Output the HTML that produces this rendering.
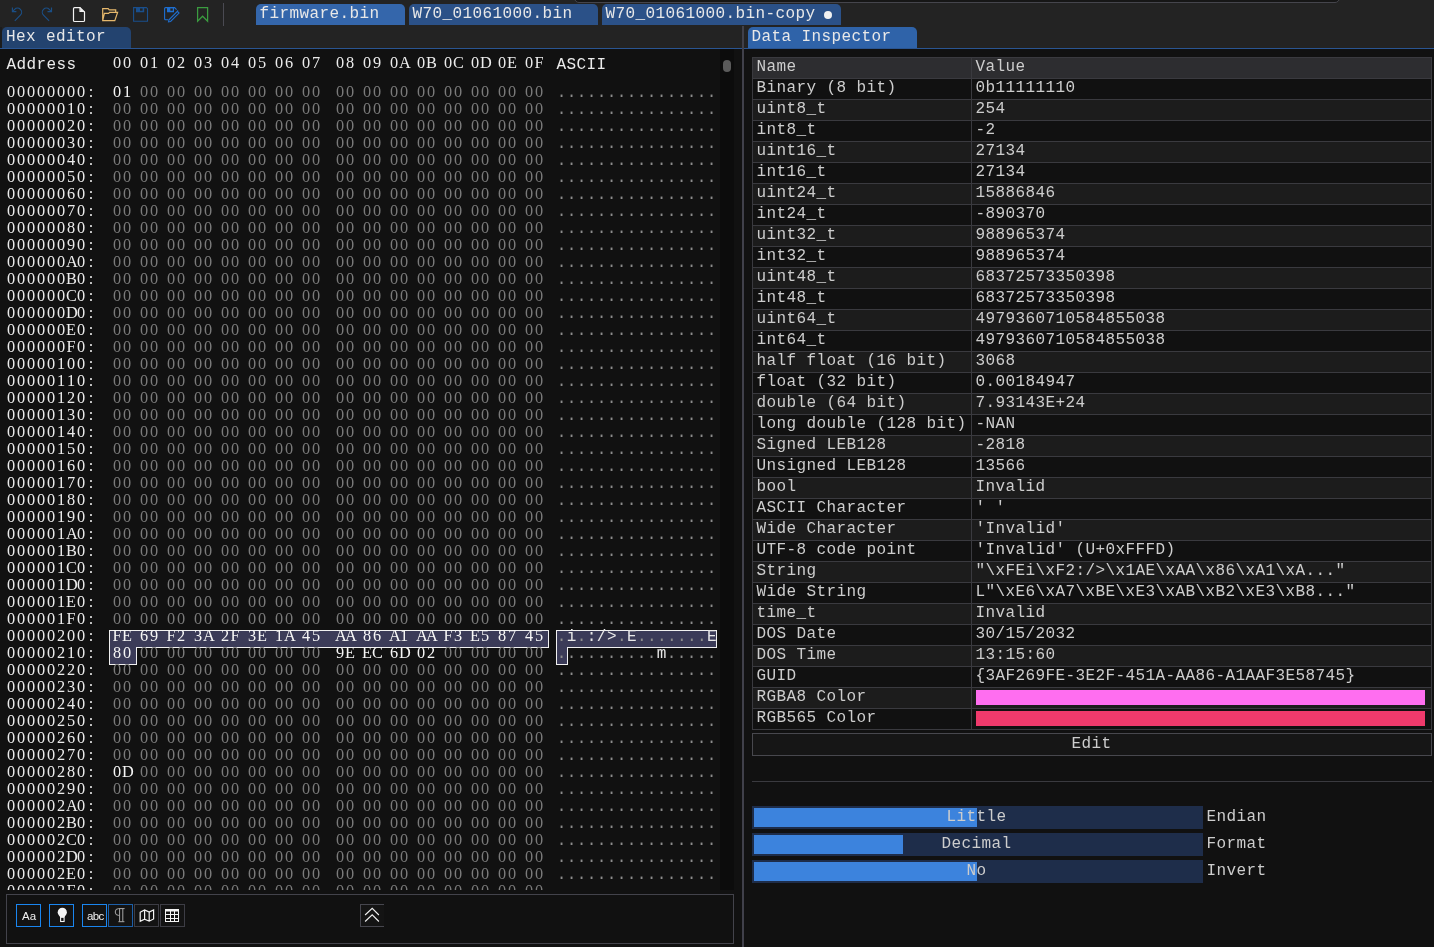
<!DOCTYPE html>
<html><head><meta charset="utf-8"><style>
*{margin:0;padding:0;box-sizing:border-box}
html,body{width:1434px;height:947px;overflow:hidden;background:#232323}
body{position:relative;font-family:"Liberation Mono",monospace;font-size:16px;letter-spacing:0.4px;line-height:17px;color:#e8e8e8}
#root{position:absolute;left:0;top:0;width:1434px;height:947px;will-change:transform;overflow:hidden}
.a{position:absolute}
p{position:absolute;white-space:pre;margin:1px 0 0 -0.5px}
.S{margin:0}
.S{display:flex;font-family:"Liberation Serif",serif;font-size:16.3px;line-height:17px;letter-spacing:0}
.S i{display:block;width:10px;text-align:center;font-style:normal}
.ad{left:6px;color:#ececec}
.hd{color:#ececec}
.z{color:#7b7b7b}
.nz{color:#f6f6f6}
.as{left:557.3px;color:#8c8c8c}
.as b{font-weight:normal;color:#e8e8e8}
.tx{color:#cdcdcd}
.hl{position:absolute;left:752px;width:680px;height:1px;background:#3a3a3f}
.tab{position:absolute;border-radius:5px 5px 0 0;color:#e8e8e8}
.btn{position:absolute;width:25px;height:23px;background:#131313}
</style></head><body><div id="root">
<div class="a" style="left:574px;top:-10px;width:766px;height:13px;background:#161616;border:1px solid #45454c;border-radius:0 0 5px 5px"></div>
<div class="tab" style="left:256px;top:4px;width:149px;height:21px;background:#3466ab"><p style="left:4px;top:1px">firmware.bin</p></div>
<div class="tab" style="left:409px;top:4px;width:189px;height:21px;background:#2b5188"><p style="left:4px;top:1px">W70_01061000.bin</p></div>
<div class="tab" style="left:602px;top:4px;width:239px;height:21px;background:#2b5188"><p style="left:4px;top:1px">W70_01061000.bin-copy</p><div class="a" style="left:222px;top:7px;width:8px;height:8px;border-radius:4px;background:#f0f0f0"></div></div>
<div class="a" style="left:223px;top:3px;width:1px;height:23px;background:#4a4a52"></div>
<div class="a" style="left:0;top:27px;width:2px;height:21px;background:#1c1c1c"></div>
<div class="tab" style="left:2px;top:27px;width:129px;height:21px;background:#23436f"><p style="left:4.5px;top:0.5px">Hex editor</p></div>
<div class="tab" style="left:748px;top:27px;width:169px;height:21px;background:#2f63a9"><p style="left:4px;top:1px">Data Inspector</p></div>
<div class="a" style="left:0;top:48px;width:742px;height:1px;background:#2a5592"></div>
<div class="a" style="left:744px;top:48px;width:690px;height:1px;background:#2a5592"></div>
<div class="a" style="left:742px;top:26px;width:2px;height:921px;background:#40404a"></div>
<div class="a" style="left:0;top:49px;width:742px;height:898px;background:#111111"></div>
<div class="a" style="left:0;top:49px;width:742px;height:841px;overflow:hidden">
 <div class="a" style="left:0;top:-49px;width:742px;height:947px">
  <p style="top:56px;left:7px;color:#ececec">Address</p>
  <p class="S hd" style="top:54px;left:112px"><i>0</i><i>0</i></p><p class="S hd" style="top:54px;left:139px"><i>0</i><i>1</i></p><p class="S hd" style="top:54px;left:166px"><i>0</i><i>2</i></p><p class="S hd" style="top:54px;left:193px"><i>0</i><i>3</i></p><p class="S hd" style="top:54px;left:220px"><i>0</i><i>4</i></p><p class="S hd" style="top:54px;left:247px"><i>0</i><i>5</i></p><p class="S hd" style="top:54px;left:274px"><i>0</i><i>6</i></p><p class="S hd" style="top:54px;left:301px"><i>0</i><i>7</i></p><p class="S hd" style="top:54px;left:335px"><i>0</i><i>8</i></p><p class="S hd" style="top:54px;left:362px"><i>0</i><i>9</i></p><p class="S hd" style="top:54px;left:389px"><i>0</i><i>A</i></p><p class="S hd" style="top:54px;left:416px"><i>0</i><i>B</i></p><p class="S hd" style="top:54px;left:443px"><i>0</i><i>C</i></p><p class="S hd" style="top:54px;left:470px"><i>0</i><i>D</i></p><p class="S hd" style="top:54px;left:497px"><i>0</i><i>E</i></p><p class="S hd" style="top:54px;left:524px"><i>0</i><i>F</i></p>
  <p style="top:56px;left:557px;color:#ececec">ASCII</p>
  <div class="a" style="left:109px;top:630px;width:440px;height:18px;background:#3b3b58;border:1px solid #f0f0f0;border-bottom:none"></div>
  <div class="a" style="left:109px;top:647px;width:28px;height:18px;background:#3b3b58;border:1px solid #f0f0f0;border-top:none"></div>
  <div class="a" style="left:136px;top:647px;width:413px;height:1px;background:#f0f0f0"></div>
  <div class="a" style="left:556px;top:630px;width:161px;height:18px;background:#3b3b58;border:1px solid #f0f0f0;border-bottom:none"></div>
  <div class="a" style="left:556px;top:647px;width:12px;height:18px;background:#3b3b58;border:1px solid #f0f0f0;border-top:none"></div>
  <div class="a" style="left:567px;top:647px;width:150px;height:1px;background:#f0f0f0"></div>
  <p class="S ad" style="top:83px"><i>0</i><i>0</i><i>0</i><i>0</i><i>0</i><i>0</i><i>0</i><i>0</i><i>:</i></p><p class="S nz" style="top:83px;left:112px"><i>0</i><i>1</i></p><p class="S z" style="top:83px;left:139px"><i>0</i><i>0</i></p><p class="S z" style="top:83px;left:166px"><i>0</i><i>0</i></p><p class="S z" style="top:83px;left:193px"><i>0</i><i>0</i></p><p class="S z" style="top:83px;left:220px"><i>0</i><i>0</i></p><p class="S z" style="top:83px;left:247px"><i>0</i><i>0</i></p><p class="S z" style="top:83px;left:274px"><i>0</i><i>0</i></p><p class="S z" style="top:83px;left:301px"><i>0</i><i>0</i></p><p class="S z" style="top:83px;left:335px"><i>0</i><i>0</i></p><p class="S z" style="top:83px;left:362px"><i>0</i><i>0</i></p><p class="S z" style="top:83px;left:389px"><i>0</i><i>0</i></p><p class="S z" style="top:83px;left:416px"><i>0</i><i>0</i></p><p class="S z" style="top:83px;left:443px"><i>0</i><i>0</i></p><p class="S z" style="top:83px;left:470px"><i>0</i><i>0</i></p><p class="S z" style="top:83px;left:497px"><i>0</i><i>0</i></p><p class="S z" style="top:83px;left:524px"><i>0</i><i>0</i></p><p class="as" style="top:84px">................</p><p class="S ad" style="top:100px"><i>0</i><i>0</i><i>0</i><i>0</i><i>0</i><i>0</i><i>1</i><i>0</i><i>:</i></p><p class="S z" style="top:100px;left:112px"><i>0</i><i>0</i></p><p class="S z" style="top:100px;left:139px"><i>0</i><i>0</i></p><p class="S z" style="top:100px;left:166px"><i>0</i><i>0</i></p><p class="S z" style="top:100px;left:193px"><i>0</i><i>0</i></p><p class="S z" style="top:100px;left:220px"><i>0</i><i>0</i></p><p class="S z" style="top:100px;left:247px"><i>0</i><i>0</i></p><p class="S z" style="top:100px;left:274px"><i>0</i><i>0</i></p><p class="S z" style="top:100px;left:301px"><i>0</i><i>0</i></p><p class="S z" style="top:100px;left:335px"><i>0</i><i>0</i></p><p class="S z" style="top:100px;left:362px"><i>0</i><i>0</i></p><p class="S z" style="top:100px;left:389px"><i>0</i><i>0</i></p><p class="S z" style="top:100px;left:416px"><i>0</i><i>0</i></p><p class="S z" style="top:100px;left:443px"><i>0</i><i>0</i></p><p class="S z" style="top:100px;left:470px"><i>0</i><i>0</i></p><p class="S z" style="top:100px;left:497px"><i>0</i><i>0</i></p><p class="S z" style="top:100px;left:524px"><i>0</i><i>0</i></p><p class="as" style="top:101px">................</p><p class="S ad" style="top:117px"><i>0</i><i>0</i><i>0</i><i>0</i><i>0</i><i>0</i><i>2</i><i>0</i><i>:</i></p><p class="S z" style="top:117px;left:112px"><i>0</i><i>0</i></p><p class="S z" style="top:117px;left:139px"><i>0</i><i>0</i></p><p class="S z" style="top:117px;left:166px"><i>0</i><i>0</i></p><p class="S z" style="top:117px;left:193px"><i>0</i><i>0</i></p><p class="S z" style="top:117px;left:220px"><i>0</i><i>0</i></p><p class="S z" style="top:117px;left:247px"><i>0</i><i>0</i></p><p class="S z" style="top:117px;left:274px"><i>0</i><i>0</i></p><p class="S z" style="top:117px;left:301px"><i>0</i><i>0</i></p><p class="S z" style="top:117px;left:335px"><i>0</i><i>0</i></p><p class="S z" style="top:117px;left:362px"><i>0</i><i>0</i></p><p class="S z" style="top:117px;left:389px"><i>0</i><i>0</i></p><p class="S z" style="top:117px;left:416px"><i>0</i><i>0</i></p><p class="S z" style="top:117px;left:443px"><i>0</i><i>0</i></p><p class="S z" style="top:117px;left:470px"><i>0</i><i>0</i></p><p class="S z" style="top:117px;left:497px"><i>0</i><i>0</i></p><p class="S z" style="top:117px;left:524px"><i>0</i><i>0</i></p><p class="as" style="top:118px">................</p><p class="S ad" style="top:134px"><i>0</i><i>0</i><i>0</i><i>0</i><i>0</i><i>0</i><i>3</i><i>0</i><i>:</i></p><p class="S z" style="top:134px;left:112px"><i>0</i><i>0</i></p><p class="S z" style="top:134px;left:139px"><i>0</i><i>0</i></p><p class="S z" style="top:134px;left:166px"><i>0</i><i>0</i></p><p class="S z" style="top:134px;left:193px"><i>0</i><i>0</i></p><p class="S z" style="top:134px;left:220px"><i>0</i><i>0</i></p><p class="S z" style="top:134px;left:247px"><i>0</i><i>0</i></p><p class="S z" style="top:134px;left:274px"><i>0</i><i>0</i></p><p class="S z" style="top:134px;left:301px"><i>0</i><i>0</i></p><p class="S z" style="top:134px;left:335px"><i>0</i><i>0</i></p><p class="S z" style="top:134px;left:362px"><i>0</i><i>0</i></p><p class="S z" style="top:134px;left:389px"><i>0</i><i>0</i></p><p class="S z" style="top:134px;left:416px"><i>0</i><i>0</i></p><p class="S z" style="top:134px;left:443px"><i>0</i><i>0</i></p><p class="S z" style="top:134px;left:470px"><i>0</i><i>0</i></p><p class="S z" style="top:134px;left:497px"><i>0</i><i>0</i></p><p class="S z" style="top:134px;left:524px"><i>0</i><i>0</i></p><p class="as" style="top:135px">................</p><p class="S ad" style="top:151px"><i>0</i><i>0</i><i>0</i><i>0</i><i>0</i><i>0</i><i>4</i><i>0</i><i>:</i></p><p class="S z" style="top:151px;left:112px"><i>0</i><i>0</i></p><p class="S z" style="top:151px;left:139px"><i>0</i><i>0</i></p><p class="S z" style="top:151px;left:166px"><i>0</i><i>0</i></p><p class="S z" style="top:151px;left:193px"><i>0</i><i>0</i></p><p class="S z" style="top:151px;left:220px"><i>0</i><i>0</i></p><p class="S z" style="top:151px;left:247px"><i>0</i><i>0</i></p><p class="S z" style="top:151px;left:274px"><i>0</i><i>0</i></p><p class="S z" style="top:151px;left:301px"><i>0</i><i>0</i></p><p class="S z" style="top:151px;left:335px"><i>0</i><i>0</i></p><p class="S z" style="top:151px;left:362px"><i>0</i><i>0</i></p><p class="S z" style="top:151px;left:389px"><i>0</i><i>0</i></p><p class="S z" style="top:151px;left:416px"><i>0</i><i>0</i></p><p class="S z" style="top:151px;left:443px"><i>0</i><i>0</i></p><p class="S z" style="top:151px;left:470px"><i>0</i><i>0</i></p><p class="S z" style="top:151px;left:497px"><i>0</i><i>0</i></p><p class="S z" style="top:151px;left:524px"><i>0</i><i>0</i></p><p class="as" style="top:152px">................</p><p class="S ad" style="top:168px"><i>0</i><i>0</i><i>0</i><i>0</i><i>0</i><i>0</i><i>5</i><i>0</i><i>:</i></p><p class="S z" style="top:168px;left:112px"><i>0</i><i>0</i></p><p class="S z" style="top:168px;left:139px"><i>0</i><i>0</i></p><p class="S z" style="top:168px;left:166px"><i>0</i><i>0</i></p><p class="S z" style="top:168px;left:193px"><i>0</i><i>0</i></p><p class="S z" style="top:168px;left:220px"><i>0</i><i>0</i></p><p class="S z" style="top:168px;left:247px"><i>0</i><i>0</i></p><p class="S z" style="top:168px;left:274px"><i>0</i><i>0</i></p><p class="S z" style="top:168px;left:301px"><i>0</i><i>0</i></p><p class="S z" style="top:168px;left:335px"><i>0</i><i>0</i></p><p class="S z" style="top:168px;left:362px"><i>0</i><i>0</i></p><p class="S z" style="top:168px;left:389px"><i>0</i><i>0</i></p><p class="S z" style="top:168px;left:416px"><i>0</i><i>0</i></p><p class="S z" style="top:168px;left:443px"><i>0</i><i>0</i></p><p class="S z" style="top:168px;left:470px"><i>0</i><i>0</i></p><p class="S z" style="top:168px;left:497px"><i>0</i><i>0</i></p><p class="S z" style="top:168px;left:524px"><i>0</i><i>0</i></p><p class="as" style="top:169px">................</p><p class="S ad" style="top:185px"><i>0</i><i>0</i><i>0</i><i>0</i><i>0</i><i>0</i><i>6</i><i>0</i><i>:</i></p><p class="S z" style="top:185px;left:112px"><i>0</i><i>0</i></p><p class="S z" style="top:185px;left:139px"><i>0</i><i>0</i></p><p class="S z" style="top:185px;left:166px"><i>0</i><i>0</i></p><p class="S z" style="top:185px;left:193px"><i>0</i><i>0</i></p><p class="S z" style="top:185px;left:220px"><i>0</i><i>0</i></p><p class="S z" style="top:185px;left:247px"><i>0</i><i>0</i></p><p class="S z" style="top:185px;left:274px"><i>0</i><i>0</i></p><p class="S z" style="top:185px;left:301px"><i>0</i><i>0</i></p><p class="S z" style="top:185px;left:335px"><i>0</i><i>0</i></p><p class="S z" style="top:185px;left:362px"><i>0</i><i>0</i></p><p class="S z" style="top:185px;left:389px"><i>0</i><i>0</i></p><p class="S z" style="top:185px;left:416px"><i>0</i><i>0</i></p><p class="S z" style="top:185px;left:443px"><i>0</i><i>0</i></p><p class="S z" style="top:185px;left:470px"><i>0</i><i>0</i></p><p class="S z" style="top:185px;left:497px"><i>0</i><i>0</i></p><p class="S z" style="top:185px;left:524px"><i>0</i><i>0</i></p><p class="as" style="top:186px">................</p><p class="S ad" style="top:202px"><i>0</i><i>0</i><i>0</i><i>0</i><i>0</i><i>0</i><i>7</i><i>0</i><i>:</i></p><p class="S z" style="top:202px;left:112px"><i>0</i><i>0</i></p><p class="S z" style="top:202px;left:139px"><i>0</i><i>0</i></p><p class="S z" style="top:202px;left:166px"><i>0</i><i>0</i></p><p class="S z" style="top:202px;left:193px"><i>0</i><i>0</i></p><p class="S z" style="top:202px;left:220px"><i>0</i><i>0</i></p><p class="S z" style="top:202px;left:247px"><i>0</i><i>0</i></p><p class="S z" style="top:202px;left:274px"><i>0</i><i>0</i></p><p class="S z" style="top:202px;left:301px"><i>0</i><i>0</i></p><p class="S z" style="top:202px;left:335px"><i>0</i><i>0</i></p><p class="S z" style="top:202px;left:362px"><i>0</i><i>0</i></p><p class="S z" style="top:202px;left:389px"><i>0</i><i>0</i></p><p class="S z" style="top:202px;left:416px"><i>0</i><i>0</i></p><p class="S z" style="top:202px;left:443px"><i>0</i><i>0</i></p><p class="S z" style="top:202px;left:470px"><i>0</i><i>0</i></p><p class="S z" style="top:202px;left:497px"><i>0</i><i>0</i></p><p class="S z" style="top:202px;left:524px"><i>0</i><i>0</i></p><p class="as" style="top:203px">................</p><p class="S ad" style="top:219px"><i>0</i><i>0</i><i>0</i><i>0</i><i>0</i><i>0</i><i>8</i><i>0</i><i>:</i></p><p class="S z" style="top:219px;left:112px"><i>0</i><i>0</i></p><p class="S z" style="top:219px;left:139px"><i>0</i><i>0</i></p><p class="S z" style="top:219px;left:166px"><i>0</i><i>0</i></p><p class="S z" style="top:219px;left:193px"><i>0</i><i>0</i></p><p class="S z" style="top:219px;left:220px"><i>0</i><i>0</i></p><p class="S z" style="top:219px;left:247px"><i>0</i><i>0</i></p><p class="S z" style="top:219px;left:274px"><i>0</i><i>0</i></p><p class="S z" style="top:219px;left:301px"><i>0</i><i>0</i></p><p class="S z" style="top:219px;left:335px"><i>0</i><i>0</i></p><p class="S z" style="top:219px;left:362px"><i>0</i><i>0</i></p><p class="S z" style="top:219px;left:389px"><i>0</i><i>0</i></p><p class="S z" style="top:219px;left:416px"><i>0</i><i>0</i></p><p class="S z" style="top:219px;left:443px"><i>0</i><i>0</i></p><p class="S z" style="top:219px;left:470px"><i>0</i><i>0</i></p><p class="S z" style="top:219px;left:497px"><i>0</i><i>0</i></p><p class="S z" style="top:219px;left:524px"><i>0</i><i>0</i></p><p class="as" style="top:220px">................</p><p class="S ad" style="top:236px"><i>0</i><i>0</i><i>0</i><i>0</i><i>0</i><i>0</i><i>9</i><i>0</i><i>:</i></p><p class="S z" style="top:236px;left:112px"><i>0</i><i>0</i></p><p class="S z" style="top:236px;left:139px"><i>0</i><i>0</i></p><p class="S z" style="top:236px;left:166px"><i>0</i><i>0</i></p><p class="S z" style="top:236px;left:193px"><i>0</i><i>0</i></p><p class="S z" style="top:236px;left:220px"><i>0</i><i>0</i></p><p class="S z" style="top:236px;left:247px"><i>0</i><i>0</i></p><p class="S z" style="top:236px;left:274px"><i>0</i><i>0</i></p><p class="S z" style="top:236px;left:301px"><i>0</i><i>0</i></p><p class="S z" style="top:236px;left:335px"><i>0</i><i>0</i></p><p class="S z" style="top:236px;left:362px"><i>0</i><i>0</i></p><p class="S z" style="top:236px;left:389px"><i>0</i><i>0</i></p><p class="S z" style="top:236px;left:416px"><i>0</i><i>0</i></p><p class="S z" style="top:236px;left:443px"><i>0</i><i>0</i></p><p class="S z" style="top:236px;left:470px"><i>0</i><i>0</i></p><p class="S z" style="top:236px;left:497px"><i>0</i><i>0</i></p><p class="S z" style="top:236px;left:524px"><i>0</i><i>0</i></p><p class="as" style="top:237px">................</p><p class="S ad" style="top:253px"><i>0</i><i>0</i><i>0</i><i>0</i><i>0</i><i>0</i><i>A</i><i>0</i><i>:</i></p><p class="S z" style="top:253px;left:112px"><i>0</i><i>0</i></p><p class="S z" style="top:253px;left:139px"><i>0</i><i>0</i></p><p class="S z" style="top:253px;left:166px"><i>0</i><i>0</i></p><p class="S z" style="top:253px;left:193px"><i>0</i><i>0</i></p><p class="S z" style="top:253px;left:220px"><i>0</i><i>0</i></p><p class="S z" style="top:253px;left:247px"><i>0</i><i>0</i></p><p class="S z" style="top:253px;left:274px"><i>0</i><i>0</i></p><p class="S z" style="top:253px;left:301px"><i>0</i><i>0</i></p><p class="S z" style="top:253px;left:335px"><i>0</i><i>0</i></p><p class="S z" style="top:253px;left:362px"><i>0</i><i>0</i></p><p class="S z" style="top:253px;left:389px"><i>0</i><i>0</i></p><p class="S z" style="top:253px;left:416px"><i>0</i><i>0</i></p><p class="S z" style="top:253px;left:443px"><i>0</i><i>0</i></p><p class="S z" style="top:253px;left:470px"><i>0</i><i>0</i></p><p class="S z" style="top:253px;left:497px"><i>0</i><i>0</i></p><p class="S z" style="top:253px;left:524px"><i>0</i><i>0</i></p><p class="as" style="top:254px">................</p><p class="S ad" style="top:270px"><i>0</i><i>0</i><i>0</i><i>0</i><i>0</i><i>0</i><i>B</i><i>0</i><i>:</i></p><p class="S z" style="top:270px;left:112px"><i>0</i><i>0</i></p><p class="S z" style="top:270px;left:139px"><i>0</i><i>0</i></p><p class="S z" style="top:270px;left:166px"><i>0</i><i>0</i></p><p class="S z" style="top:270px;left:193px"><i>0</i><i>0</i></p><p class="S z" style="top:270px;left:220px"><i>0</i><i>0</i></p><p class="S z" style="top:270px;left:247px"><i>0</i><i>0</i></p><p class="S z" style="top:270px;left:274px"><i>0</i><i>0</i></p><p class="S z" style="top:270px;left:301px"><i>0</i><i>0</i></p><p class="S z" style="top:270px;left:335px"><i>0</i><i>0</i></p><p class="S z" style="top:270px;left:362px"><i>0</i><i>0</i></p><p class="S z" style="top:270px;left:389px"><i>0</i><i>0</i></p><p class="S z" style="top:270px;left:416px"><i>0</i><i>0</i></p><p class="S z" style="top:270px;left:443px"><i>0</i><i>0</i></p><p class="S z" style="top:270px;left:470px"><i>0</i><i>0</i></p><p class="S z" style="top:270px;left:497px"><i>0</i><i>0</i></p><p class="S z" style="top:270px;left:524px"><i>0</i><i>0</i></p><p class="as" style="top:271px">................</p><p class="S ad" style="top:287px"><i>0</i><i>0</i><i>0</i><i>0</i><i>0</i><i>0</i><i>C</i><i>0</i><i>:</i></p><p class="S z" style="top:287px;left:112px"><i>0</i><i>0</i></p><p class="S z" style="top:287px;left:139px"><i>0</i><i>0</i></p><p class="S z" style="top:287px;left:166px"><i>0</i><i>0</i></p><p class="S z" style="top:287px;left:193px"><i>0</i><i>0</i></p><p class="S z" style="top:287px;left:220px"><i>0</i><i>0</i></p><p class="S z" style="top:287px;left:247px"><i>0</i><i>0</i></p><p class="S z" style="top:287px;left:274px"><i>0</i><i>0</i></p><p class="S z" style="top:287px;left:301px"><i>0</i><i>0</i></p><p class="S z" style="top:287px;left:335px"><i>0</i><i>0</i></p><p class="S z" style="top:287px;left:362px"><i>0</i><i>0</i></p><p class="S z" style="top:287px;left:389px"><i>0</i><i>0</i></p><p class="S z" style="top:287px;left:416px"><i>0</i><i>0</i></p><p class="S z" style="top:287px;left:443px"><i>0</i><i>0</i></p><p class="S z" style="top:287px;left:470px"><i>0</i><i>0</i></p><p class="S z" style="top:287px;left:497px"><i>0</i><i>0</i></p><p class="S z" style="top:287px;left:524px"><i>0</i><i>0</i></p><p class="as" style="top:288px">................</p><p class="S ad" style="top:304px"><i>0</i><i>0</i><i>0</i><i>0</i><i>0</i><i>0</i><i>D</i><i>0</i><i>:</i></p><p class="S z" style="top:304px;left:112px"><i>0</i><i>0</i></p><p class="S z" style="top:304px;left:139px"><i>0</i><i>0</i></p><p class="S z" style="top:304px;left:166px"><i>0</i><i>0</i></p><p class="S z" style="top:304px;left:193px"><i>0</i><i>0</i></p><p class="S z" style="top:304px;left:220px"><i>0</i><i>0</i></p><p class="S z" style="top:304px;left:247px"><i>0</i><i>0</i></p><p class="S z" style="top:304px;left:274px"><i>0</i><i>0</i></p><p class="S z" style="top:304px;left:301px"><i>0</i><i>0</i></p><p class="S z" style="top:304px;left:335px"><i>0</i><i>0</i></p><p class="S z" style="top:304px;left:362px"><i>0</i><i>0</i></p><p class="S z" style="top:304px;left:389px"><i>0</i><i>0</i></p><p class="S z" style="top:304px;left:416px"><i>0</i><i>0</i></p><p class="S z" style="top:304px;left:443px"><i>0</i><i>0</i></p><p class="S z" style="top:304px;left:470px"><i>0</i><i>0</i></p><p class="S z" style="top:304px;left:497px"><i>0</i><i>0</i></p><p class="S z" style="top:304px;left:524px"><i>0</i><i>0</i></p><p class="as" style="top:305px">................</p><p class="S ad" style="top:321px"><i>0</i><i>0</i><i>0</i><i>0</i><i>0</i><i>0</i><i>E</i><i>0</i><i>:</i></p><p class="S z" style="top:321px;left:112px"><i>0</i><i>0</i></p><p class="S z" style="top:321px;left:139px"><i>0</i><i>0</i></p><p class="S z" style="top:321px;left:166px"><i>0</i><i>0</i></p><p class="S z" style="top:321px;left:193px"><i>0</i><i>0</i></p><p class="S z" style="top:321px;left:220px"><i>0</i><i>0</i></p><p class="S z" style="top:321px;left:247px"><i>0</i><i>0</i></p><p class="S z" style="top:321px;left:274px"><i>0</i><i>0</i></p><p class="S z" style="top:321px;left:301px"><i>0</i><i>0</i></p><p class="S z" style="top:321px;left:335px"><i>0</i><i>0</i></p><p class="S z" style="top:321px;left:362px"><i>0</i><i>0</i></p><p class="S z" style="top:321px;left:389px"><i>0</i><i>0</i></p><p class="S z" style="top:321px;left:416px"><i>0</i><i>0</i></p><p class="S z" style="top:321px;left:443px"><i>0</i><i>0</i></p><p class="S z" style="top:321px;left:470px"><i>0</i><i>0</i></p><p class="S z" style="top:321px;left:497px"><i>0</i><i>0</i></p><p class="S z" style="top:321px;left:524px"><i>0</i><i>0</i></p><p class="as" style="top:322px">................</p><p class="S ad" style="top:338px"><i>0</i><i>0</i><i>0</i><i>0</i><i>0</i><i>0</i><i>F</i><i>0</i><i>:</i></p><p class="S z" style="top:338px;left:112px"><i>0</i><i>0</i></p><p class="S z" style="top:338px;left:139px"><i>0</i><i>0</i></p><p class="S z" style="top:338px;left:166px"><i>0</i><i>0</i></p><p class="S z" style="top:338px;left:193px"><i>0</i><i>0</i></p><p class="S z" style="top:338px;left:220px"><i>0</i><i>0</i></p><p class="S z" style="top:338px;left:247px"><i>0</i><i>0</i></p><p class="S z" style="top:338px;left:274px"><i>0</i><i>0</i></p><p class="S z" style="top:338px;left:301px"><i>0</i><i>0</i></p><p class="S z" style="top:338px;left:335px"><i>0</i><i>0</i></p><p class="S z" style="top:338px;left:362px"><i>0</i><i>0</i></p><p class="S z" style="top:338px;left:389px"><i>0</i><i>0</i></p><p class="S z" style="top:338px;left:416px"><i>0</i><i>0</i></p><p class="S z" style="top:338px;left:443px"><i>0</i><i>0</i></p><p class="S z" style="top:338px;left:470px"><i>0</i><i>0</i></p><p class="S z" style="top:338px;left:497px"><i>0</i><i>0</i></p><p class="S z" style="top:338px;left:524px"><i>0</i><i>0</i></p><p class="as" style="top:339px">................</p><p class="S ad" style="top:355px"><i>0</i><i>0</i><i>0</i><i>0</i><i>0</i><i>1</i><i>0</i><i>0</i><i>:</i></p><p class="S z" style="top:355px;left:112px"><i>0</i><i>0</i></p><p class="S z" style="top:355px;left:139px"><i>0</i><i>0</i></p><p class="S z" style="top:355px;left:166px"><i>0</i><i>0</i></p><p class="S z" style="top:355px;left:193px"><i>0</i><i>0</i></p><p class="S z" style="top:355px;left:220px"><i>0</i><i>0</i></p><p class="S z" style="top:355px;left:247px"><i>0</i><i>0</i></p><p class="S z" style="top:355px;left:274px"><i>0</i><i>0</i></p><p class="S z" style="top:355px;left:301px"><i>0</i><i>0</i></p><p class="S z" style="top:355px;left:335px"><i>0</i><i>0</i></p><p class="S z" style="top:355px;left:362px"><i>0</i><i>0</i></p><p class="S z" style="top:355px;left:389px"><i>0</i><i>0</i></p><p class="S z" style="top:355px;left:416px"><i>0</i><i>0</i></p><p class="S z" style="top:355px;left:443px"><i>0</i><i>0</i></p><p class="S z" style="top:355px;left:470px"><i>0</i><i>0</i></p><p class="S z" style="top:355px;left:497px"><i>0</i><i>0</i></p><p class="S z" style="top:355px;left:524px"><i>0</i><i>0</i></p><p class="as" style="top:356px">................</p><p class="S ad" style="top:372px"><i>0</i><i>0</i><i>0</i><i>0</i><i>0</i><i>1</i><i>1</i><i>0</i><i>:</i></p><p class="S z" style="top:372px;left:112px"><i>0</i><i>0</i></p><p class="S z" style="top:372px;left:139px"><i>0</i><i>0</i></p><p class="S z" style="top:372px;left:166px"><i>0</i><i>0</i></p><p class="S z" style="top:372px;left:193px"><i>0</i><i>0</i></p><p class="S z" style="top:372px;left:220px"><i>0</i><i>0</i></p><p class="S z" style="top:372px;left:247px"><i>0</i><i>0</i></p><p class="S z" style="top:372px;left:274px"><i>0</i><i>0</i></p><p class="S z" style="top:372px;left:301px"><i>0</i><i>0</i></p><p class="S z" style="top:372px;left:335px"><i>0</i><i>0</i></p><p class="S z" style="top:372px;left:362px"><i>0</i><i>0</i></p><p class="S z" style="top:372px;left:389px"><i>0</i><i>0</i></p><p class="S z" style="top:372px;left:416px"><i>0</i><i>0</i></p><p class="S z" style="top:372px;left:443px"><i>0</i><i>0</i></p><p class="S z" style="top:372px;left:470px"><i>0</i><i>0</i></p><p class="S z" style="top:372px;left:497px"><i>0</i><i>0</i></p><p class="S z" style="top:372px;left:524px"><i>0</i><i>0</i></p><p class="as" style="top:373px">................</p><p class="S ad" style="top:389px"><i>0</i><i>0</i><i>0</i><i>0</i><i>0</i><i>1</i><i>2</i><i>0</i><i>:</i></p><p class="S z" style="top:389px;left:112px"><i>0</i><i>0</i></p><p class="S z" style="top:389px;left:139px"><i>0</i><i>0</i></p><p class="S z" style="top:389px;left:166px"><i>0</i><i>0</i></p><p class="S z" style="top:389px;left:193px"><i>0</i><i>0</i></p><p class="S z" style="top:389px;left:220px"><i>0</i><i>0</i></p><p class="S z" style="top:389px;left:247px"><i>0</i><i>0</i></p><p class="S z" style="top:389px;left:274px"><i>0</i><i>0</i></p><p class="S z" style="top:389px;left:301px"><i>0</i><i>0</i></p><p class="S z" style="top:389px;left:335px"><i>0</i><i>0</i></p><p class="S z" style="top:389px;left:362px"><i>0</i><i>0</i></p><p class="S z" style="top:389px;left:389px"><i>0</i><i>0</i></p><p class="S z" style="top:389px;left:416px"><i>0</i><i>0</i></p><p class="S z" style="top:389px;left:443px"><i>0</i><i>0</i></p><p class="S z" style="top:389px;left:470px"><i>0</i><i>0</i></p><p class="S z" style="top:389px;left:497px"><i>0</i><i>0</i></p><p class="S z" style="top:389px;left:524px"><i>0</i><i>0</i></p><p class="as" style="top:390px">................</p><p class="S ad" style="top:406px"><i>0</i><i>0</i><i>0</i><i>0</i><i>0</i><i>1</i><i>3</i><i>0</i><i>:</i></p><p class="S z" style="top:406px;left:112px"><i>0</i><i>0</i></p><p class="S z" style="top:406px;left:139px"><i>0</i><i>0</i></p><p class="S z" style="top:406px;left:166px"><i>0</i><i>0</i></p><p class="S z" style="top:406px;left:193px"><i>0</i><i>0</i></p><p class="S z" style="top:406px;left:220px"><i>0</i><i>0</i></p><p class="S z" style="top:406px;left:247px"><i>0</i><i>0</i></p><p class="S z" style="top:406px;left:274px"><i>0</i><i>0</i></p><p class="S z" style="top:406px;left:301px"><i>0</i><i>0</i></p><p class="S z" style="top:406px;left:335px"><i>0</i><i>0</i></p><p class="S z" style="top:406px;left:362px"><i>0</i><i>0</i></p><p class="S z" style="top:406px;left:389px"><i>0</i><i>0</i></p><p class="S z" style="top:406px;left:416px"><i>0</i><i>0</i></p><p class="S z" style="top:406px;left:443px"><i>0</i><i>0</i></p><p class="S z" style="top:406px;left:470px"><i>0</i><i>0</i></p><p class="S z" style="top:406px;left:497px"><i>0</i><i>0</i></p><p class="S z" style="top:406px;left:524px"><i>0</i><i>0</i></p><p class="as" style="top:407px">................</p><p class="S ad" style="top:423px"><i>0</i><i>0</i><i>0</i><i>0</i><i>0</i><i>1</i><i>4</i><i>0</i><i>:</i></p><p class="S z" style="top:423px;left:112px"><i>0</i><i>0</i></p><p class="S z" style="top:423px;left:139px"><i>0</i><i>0</i></p><p class="S z" style="top:423px;left:166px"><i>0</i><i>0</i></p><p class="S z" style="top:423px;left:193px"><i>0</i><i>0</i></p><p class="S z" style="top:423px;left:220px"><i>0</i><i>0</i></p><p class="S z" style="top:423px;left:247px"><i>0</i><i>0</i></p><p class="S z" style="top:423px;left:274px"><i>0</i><i>0</i></p><p class="S z" style="top:423px;left:301px"><i>0</i><i>0</i></p><p class="S z" style="top:423px;left:335px"><i>0</i><i>0</i></p><p class="S z" style="top:423px;left:362px"><i>0</i><i>0</i></p><p class="S z" style="top:423px;left:389px"><i>0</i><i>0</i></p><p class="S z" style="top:423px;left:416px"><i>0</i><i>0</i></p><p class="S z" style="top:423px;left:443px"><i>0</i><i>0</i></p><p class="S z" style="top:423px;left:470px"><i>0</i><i>0</i></p><p class="S z" style="top:423px;left:497px"><i>0</i><i>0</i></p><p class="S z" style="top:423px;left:524px"><i>0</i><i>0</i></p><p class="as" style="top:424px">................</p><p class="S ad" style="top:440px"><i>0</i><i>0</i><i>0</i><i>0</i><i>0</i><i>1</i><i>5</i><i>0</i><i>:</i></p><p class="S z" style="top:440px;left:112px"><i>0</i><i>0</i></p><p class="S z" style="top:440px;left:139px"><i>0</i><i>0</i></p><p class="S z" style="top:440px;left:166px"><i>0</i><i>0</i></p><p class="S z" style="top:440px;left:193px"><i>0</i><i>0</i></p><p class="S z" style="top:440px;left:220px"><i>0</i><i>0</i></p><p class="S z" style="top:440px;left:247px"><i>0</i><i>0</i></p><p class="S z" style="top:440px;left:274px"><i>0</i><i>0</i></p><p class="S z" style="top:440px;left:301px"><i>0</i><i>0</i></p><p class="S z" style="top:440px;left:335px"><i>0</i><i>0</i></p><p class="S z" style="top:440px;left:362px"><i>0</i><i>0</i></p><p class="S z" style="top:440px;left:389px"><i>0</i><i>0</i></p><p class="S z" style="top:440px;left:416px"><i>0</i><i>0</i></p><p class="S z" style="top:440px;left:443px"><i>0</i><i>0</i></p><p class="S z" style="top:440px;left:470px"><i>0</i><i>0</i></p><p class="S z" style="top:440px;left:497px"><i>0</i><i>0</i></p><p class="S z" style="top:440px;left:524px"><i>0</i><i>0</i></p><p class="as" style="top:441px">................</p><p class="S ad" style="top:457px"><i>0</i><i>0</i><i>0</i><i>0</i><i>0</i><i>1</i><i>6</i><i>0</i><i>:</i></p><p class="S z" style="top:457px;left:112px"><i>0</i><i>0</i></p><p class="S z" style="top:457px;left:139px"><i>0</i><i>0</i></p><p class="S z" style="top:457px;left:166px"><i>0</i><i>0</i></p><p class="S z" style="top:457px;left:193px"><i>0</i><i>0</i></p><p class="S z" style="top:457px;left:220px"><i>0</i><i>0</i></p><p class="S z" style="top:457px;left:247px"><i>0</i><i>0</i></p><p class="S z" style="top:457px;left:274px"><i>0</i><i>0</i></p><p class="S z" style="top:457px;left:301px"><i>0</i><i>0</i></p><p class="S z" style="top:457px;left:335px"><i>0</i><i>0</i></p><p class="S z" style="top:457px;left:362px"><i>0</i><i>0</i></p><p class="S z" style="top:457px;left:389px"><i>0</i><i>0</i></p><p class="S z" style="top:457px;left:416px"><i>0</i><i>0</i></p><p class="S z" style="top:457px;left:443px"><i>0</i><i>0</i></p><p class="S z" style="top:457px;left:470px"><i>0</i><i>0</i></p><p class="S z" style="top:457px;left:497px"><i>0</i><i>0</i></p><p class="S z" style="top:457px;left:524px"><i>0</i><i>0</i></p><p class="as" style="top:458px">................</p><p class="S ad" style="top:474px"><i>0</i><i>0</i><i>0</i><i>0</i><i>0</i><i>1</i><i>7</i><i>0</i><i>:</i></p><p class="S z" style="top:474px;left:112px"><i>0</i><i>0</i></p><p class="S z" style="top:474px;left:139px"><i>0</i><i>0</i></p><p class="S z" style="top:474px;left:166px"><i>0</i><i>0</i></p><p class="S z" style="top:474px;left:193px"><i>0</i><i>0</i></p><p class="S z" style="top:474px;left:220px"><i>0</i><i>0</i></p><p class="S z" style="top:474px;left:247px"><i>0</i><i>0</i></p><p class="S z" style="top:474px;left:274px"><i>0</i><i>0</i></p><p class="S z" style="top:474px;left:301px"><i>0</i><i>0</i></p><p class="S z" style="top:474px;left:335px"><i>0</i><i>0</i></p><p class="S z" style="top:474px;left:362px"><i>0</i><i>0</i></p><p class="S z" style="top:474px;left:389px"><i>0</i><i>0</i></p><p class="S z" style="top:474px;left:416px"><i>0</i><i>0</i></p><p class="S z" style="top:474px;left:443px"><i>0</i><i>0</i></p><p class="S z" style="top:474px;left:470px"><i>0</i><i>0</i></p><p class="S z" style="top:474px;left:497px"><i>0</i><i>0</i></p><p class="S z" style="top:474px;left:524px"><i>0</i><i>0</i></p><p class="as" style="top:475px">................</p><p class="S ad" style="top:491px"><i>0</i><i>0</i><i>0</i><i>0</i><i>0</i><i>1</i><i>8</i><i>0</i><i>:</i></p><p class="S z" style="top:491px;left:112px"><i>0</i><i>0</i></p><p class="S z" style="top:491px;left:139px"><i>0</i><i>0</i></p><p class="S z" style="top:491px;left:166px"><i>0</i><i>0</i></p><p class="S z" style="top:491px;left:193px"><i>0</i><i>0</i></p><p class="S z" style="top:491px;left:220px"><i>0</i><i>0</i></p><p class="S z" style="top:491px;left:247px"><i>0</i><i>0</i></p><p class="S z" style="top:491px;left:274px"><i>0</i><i>0</i></p><p class="S z" style="top:491px;left:301px"><i>0</i><i>0</i></p><p class="S z" style="top:491px;left:335px"><i>0</i><i>0</i></p><p class="S z" style="top:491px;left:362px"><i>0</i><i>0</i></p><p class="S z" style="top:491px;left:389px"><i>0</i><i>0</i></p><p class="S z" style="top:491px;left:416px"><i>0</i><i>0</i></p><p class="S z" style="top:491px;left:443px"><i>0</i><i>0</i></p><p class="S z" style="top:491px;left:470px"><i>0</i><i>0</i></p><p class="S z" style="top:491px;left:497px"><i>0</i><i>0</i></p><p class="S z" style="top:491px;left:524px"><i>0</i><i>0</i></p><p class="as" style="top:492px">................</p><p class="S ad" style="top:508px"><i>0</i><i>0</i><i>0</i><i>0</i><i>0</i><i>1</i><i>9</i><i>0</i><i>:</i></p><p class="S z" style="top:508px;left:112px"><i>0</i><i>0</i></p><p class="S z" style="top:508px;left:139px"><i>0</i><i>0</i></p><p class="S z" style="top:508px;left:166px"><i>0</i><i>0</i></p><p class="S z" style="top:508px;left:193px"><i>0</i><i>0</i></p><p class="S z" style="top:508px;left:220px"><i>0</i><i>0</i></p><p class="S z" style="top:508px;left:247px"><i>0</i><i>0</i></p><p class="S z" style="top:508px;left:274px"><i>0</i><i>0</i></p><p class="S z" style="top:508px;left:301px"><i>0</i><i>0</i></p><p class="S z" style="top:508px;left:335px"><i>0</i><i>0</i></p><p class="S z" style="top:508px;left:362px"><i>0</i><i>0</i></p><p class="S z" style="top:508px;left:389px"><i>0</i><i>0</i></p><p class="S z" style="top:508px;left:416px"><i>0</i><i>0</i></p><p class="S z" style="top:508px;left:443px"><i>0</i><i>0</i></p><p class="S z" style="top:508px;left:470px"><i>0</i><i>0</i></p><p class="S z" style="top:508px;left:497px"><i>0</i><i>0</i></p><p class="S z" style="top:508px;left:524px"><i>0</i><i>0</i></p><p class="as" style="top:509px">................</p><p class="S ad" style="top:525px"><i>0</i><i>0</i><i>0</i><i>0</i><i>0</i><i>1</i><i>A</i><i>0</i><i>:</i></p><p class="S z" style="top:525px;left:112px"><i>0</i><i>0</i></p><p class="S z" style="top:525px;left:139px"><i>0</i><i>0</i></p><p class="S z" style="top:525px;left:166px"><i>0</i><i>0</i></p><p class="S z" style="top:525px;left:193px"><i>0</i><i>0</i></p><p class="S z" style="top:525px;left:220px"><i>0</i><i>0</i></p><p class="S z" style="top:525px;left:247px"><i>0</i><i>0</i></p><p class="S z" style="top:525px;left:274px"><i>0</i><i>0</i></p><p class="S z" style="top:525px;left:301px"><i>0</i><i>0</i></p><p class="S z" style="top:525px;left:335px"><i>0</i><i>0</i></p><p class="S z" style="top:525px;left:362px"><i>0</i><i>0</i></p><p class="S z" style="top:525px;left:389px"><i>0</i><i>0</i></p><p class="S z" style="top:525px;left:416px"><i>0</i><i>0</i></p><p class="S z" style="top:525px;left:443px"><i>0</i><i>0</i></p><p class="S z" style="top:525px;left:470px"><i>0</i><i>0</i></p><p class="S z" style="top:525px;left:497px"><i>0</i><i>0</i></p><p class="S z" style="top:525px;left:524px"><i>0</i><i>0</i></p><p class="as" style="top:526px">................</p><p class="S ad" style="top:542px"><i>0</i><i>0</i><i>0</i><i>0</i><i>0</i><i>1</i><i>B</i><i>0</i><i>:</i></p><p class="S z" style="top:542px;left:112px"><i>0</i><i>0</i></p><p class="S z" style="top:542px;left:139px"><i>0</i><i>0</i></p><p class="S z" style="top:542px;left:166px"><i>0</i><i>0</i></p><p class="S z" style="top:542px;left:193px"><i>0</i><i>0</i></p><p class="S z" style="top:542px;left:220px"><i>0</i><i>0</i></p><p class="S z" style="top:542px;left:247px"><i>0</i><i>0</i></p><p class="S z" style="top:542px;left:274px"><i>0</i><i>0</i></p><p class="S z" style="top:542px;left:301px"><i>0</i><i>0</i></p><p class="S z" style="top:542px;left:335px"><i>0</i><i>0</i></p><p class="S z" style="top:542px;left:362px"><i>0</i><i>0</i></p><p class="S z" style="top:542px;left:389px"><i>0</i><i>0</i></p><p class="S z" style="top:542px;left:416px"><i>0</i><i>0</i></p><p class="S z" style="top:542px;left:443px"><i>0</i><i>0</i></p><p class="S z" style="top:542px;left:470px"><i>0</i><i>0</i></p><p class="S z" style="top:542px;left:497px"><i>0</i><i>0</i></p><p class="S z" style="top:542px;left:524px"><i>0</i><i>0</i></p><p class="as" style="top:543px">................</p><p class="S ad" style="top:559px"><i>0</i><i>0</i><i>0</i><i>0</i><i>0</i><i>1</i><i>C</i><i>0</i><i>:</i></p><p class="S z" style="top:559px;left:112px"><i>0</i><i>0</i></p><p class="S z" style="top:559px;left:139px"><i>0</i><i>0</i></p><p class="S z" style="top:559px;left:166px"><i>0</i><i>0</i></p><p class="S z" style="top:559px;left:193px"><i>0</i><i>0</i></p><p class="S z" style="top:559px;left:220px"><i>0</i><i>0</i></p><p class="S z" style="top:559px;left:247px"><i>0</i><i>0</i></p><p class="S z" style="top:559px;left:274px"><i>0</i><i>0</i></p><p class="S z" style="top:559px;left:301px"><i>0</i><i>0</i></p><p class="S z" style="top:559px;left:335px"><i>0</i><i>0</i></p><p class="S z" style="top:559px;left:362px"><i>0</i><i>0</i></p><p class="S z" style="top:559px;left:389px"><i>0</i><i>0</i></p><p class="S z" style="top:559px;left:416px"><i>0</i><i>0</i></p><p class="S z" style="top:559px;left:443px"><i>0</i><i>0</i></p><p class="S z" style="top:559px;left:470px"><i>0</i><i>0</i></p><p class="S z" style="top:559px;left:497px"><i>0</i><i>0</i></p><p class="S z" style="top:559px;left:524px"><i>0</i><i>0</i></p><p class="as" style="top:560px">................</p><p class="S ad" style="top:576px"><i>0</i><i>0</i><i>0</i><i>0</i><i>0</i><i>1</i><i>D</i><i>0</i><i>:</i></p><p class="S z" style="top:576px;left:112px"><i>0</i><i>0</i></p><p class="S z" style="top:576px;left:139px"><i>0</i><i>0</i></p><p class="S z" style="top:576px;left:166px"><i>0</i><i>0</i></p><p class="S z" style="top:576px;left:193px"><i>0</i><i>0</i></p><p class="S z" style="top:576px;left:220px"><i>0</i><i>0</i></p><p class="S z" style="top:576px;left:247px"><i>0</i><i>0</i></p><p class="S z" style="top:576px;left:274px"><i>0</i><i>0</i></p><p class="S z" style="top:576px;left:301px"><i>0</i><i>0</i></p><p class="S z" style="top:576px;left:335px"><i>0</i><i>0</i></p><p class="S z" style="top:576px;left:362px"><i>0</i><i>0</i></p><p class="S z" style="top:576px;left:389px"><i>0</i><i>0</i></p><p class="S z" style="top:576px;left:416px"><i>0</i><i>0</i></p><p class="S z" style="top:576px;left:443px"><i>0</i><i>0</i></p><p class="S z" style="top:576px;left:470px"><i>0</i><i>0</i></p><p class="S z" style="top:576px;left:497px"><i>0</i><i>0</i></p><p class="S z" style="top:576px;left:524px"><i>0</i><i>0</i></p><p class="as" style="top:577px">................</p><p class="S ad" style="top:593px"><i>0</i><i>0</i><i>0</i><i>0</i><i>0</i><i>1</i><i>E</i><i>0</i><i>:</i></p><p class="S z" style="top:593px;left:112px"><i>0</i><i>0</i></p><p class="S z" style="top:593px;left:139px"><i>0</i><i>0</i></p><p class="S z" style="top:593px;left:166px"><i>0</i><i>0</i></p><p class="S z" style="top:593px;left:193px"><i>0</i><i>0</i></p><p class="S z" style="top:593px;left:220px"><i>0</i><i>0</i></p><p class="S z" style="top:593px;left:247px"><i>0</i><i>0</i></p><p class="S z" style="top:593px;left:274px"><i>0</i><i>0</i></p><p class="S z" style="top:593px;left:301px"><i>0</i><i>0</i></p><p class="S z" style="top:593px;left:335px"><i>0</i><i>0</i></p><p class="S z" style="top:593px;left:362px"><i>0</i><i>0</i></p><p class="S z" style="top:593px;left:389px"><i>0</i><i>0</i></p><p class="S z" style="top:593px;left:416px"><i>0</i><i>0</i></p><p class="S z" style="top:593px;left:443px"><i>0</i><i>0</i></p><p class="S z" style="top:593px;left:470px"><i>0</i><i>0</i></p><p class="S z" style="top:593px;left:497px"><i>0</i><i>0</i></p><p class="S z" style="top:593px;left:524px"><i>0</i><i>0</i></p><p class="as" style="top:594px">................</p><p class="S ad" style="top:610px"><i>0</i><i>0</i><i>0</i><i>0</i><i>0</i><i>1</i><i>F</i><i>0</i><i>:</i></p><p class="S z" style="top:610px;left:112px"><i>0</i><i>0</i></p><p class="S z" style="top:610px;left:139px"><i>0</i><i>0</i></p><p class="S z" style="top:610px;left:166px"><i>0</i><i>0</i></p><p class="S z" style="top:610px;left:193px"><i>0</i><i>0</i></p><p class="S z" style="top:610px;left:220px"><i>0</i><i>0</i></p><p class="S z" style="top:610px;left:247px"><i>0</i><i>0</i></p><p class="S z" style="top:610px;left:274px"><i>0</i><i>0</i></p><p class="S z" style="top:610px;left:301px"><i>0</i><i>0</i></p><p class="S z" style="top:610px;left:335px"><i>0</i><i>0</i></p><p class="S z" style="top:610px;left:362px"><i>0</i><i>0</i></p><p class="S z" style="top:610px;left:389px"><i>0</i><i>0</i></p><p class="S z" style="top:610px;left:416px"><i>0</i><i>0</i></p><p class="S z" style="top:610px;left:443px"><i>0</i><i>0</i></p><p class="S z" style="top:610px;left:470px"><i>0</i><i>0</i></p><p class="S z" style="top:610px;left:497px"><i>0</i><i>0</i></p><p class="S z" style="top:610px;left:524px"><i>0</i><i>0</i></p><p class="as" style="top:611px">................</p><p class="S ad" style="top:627px"><i>0</i><i>0</i><i>0</i><i>0</i><i>0</i><i>2</i><i>0</i><i>0</i><i>:</i></p><p class="S nz" style="top:627px;left:112px"><i>F</i><i>E</i></p><p class="S nz" style="top:627px;left:139px"><i>6</i><i>9</i></p><p class="S nz" style="top:627px;left:166px"><i>F</i><i>2</i></p><p class="S nz" style="top:627px;left:193px"><i>3</i><i>A</i></p><p class="S nz" style="top:627px;left:220px"><i>2</i><i>F</i></p><p class="S nz" style="top:627px;left:247px"><i>3</i><i>E</i></p><p class="S nz" style="top:627px;left:274px"><i>1</i><i>A</i></p><p class="S nz" style="top:627px;left:301px"><i>4</i><i>5</i></p><p class="S nz" style="top:627px;left:335px"><i>A</i><i>A</i></p><p class="S nz" style="top:627px;left:362px"><i>8</i><i>6</i></p><p class="S nz" style="top:627px;left:389px"><i>A</i><i>1</i></p><p class="S nz" style="top:627px;left:416px"><i>A</i><i>A</i></p><p class="S nz" style="top:627px;left:443px"><i>F</i><i>3</i></p><p class="S nz" style="top:627px;left:470px"><i>E</i><i>5</i></p><p class="S nz" style="top:627px;left:497px"><i>8</i><i>7</i></p><p class="S nz" style="top:627px;left:524px"><i>4</i><i>5</i></p><p class="as" style="top:628px">.<b>i</b>.<b>:</b><b>/</b><b>&gt;</b>.<b>E</b>.......<b>E</b></p><p class="S ad" style="top:644px"><i>0</i><i>0</i><i>0</i><i>0</i><i>0</i><i>2</i><i>1</i><i>0</i><i>:</i></p><p class="S nz" style="top:644px;left:112px"><i>8</i><i>0</i></p><p class="S z" style="top:644px;left:139px"><i>0</i><i>0</i></p><p class="S z" style="top:644px;left:166px"><i>0</i><i>0</i></p><p class="S z" style="top:644px;left:193px"><i>0</i><i>0</i></p><p class="S z" style="top:644px;left:220px"><i>0</i><i>0</i></p><p class="S z" style="top:644px;left:247px"><i>0</i><i>0</i></p><p class="S z" style="top:644px;left:274px"><i>0</i><i>0</i></p><p class="S z" style="top:644px;left:301px"><i>0</i><i>0</i></p><p class="S nz" style="top:644px;left:335px"><i>9</i><i>E</i></p><p class="S nz" style="top:644px;left:362px"><i>E</i><i>C</i></p><p class="S nz" style="top:644px;left:389px"><i>6</i><i>D</i></p><p class="S nz" style="top:644px;left:416px"><i>0</i><i>2</i></p><p class="S z" style="top:644px;left:443px"><i>0</i><i>0</i></p><p class="S z" style="top:644px;left:470px"><i>0</i><i>0</i></p><p class="S z" style="top:644px;left:497px"><i>0</i><i>0</i></p><p class="S z" style="top:644px;left:524px"><i>0</i><i>0</i></p><p class="as" style="top:645px">..........<b>m</b>.....</p><p class="S ad" style="top:661px"><i>0</i><i>0</i><i>0</i><i>0</i><i>0</i><i>2</i><i>2</i><i>0</i><i>:</i></p><p class="S z" style="top:661px;left:112px"><i>0</i><i>0</i></p><p class="S z" style="top:661px;left:139px"><i>0</i><i>0</i></p><p class="S z" style="top:661px;left:166px"><i>0</i><i>0</i></p><p class="S z" style="top:661px;left:193px"><i>0</i><i>0</i></p><p class="S z" style="top:661px;left:220px"><i>0</i><i>0</i></p><p class="S z" style="top:661px;left:247px"><i>0</i><i>0</i></p><p class="S z" style="top:661px;left:274px"><i>0</i><i>0</i></p><p class="S z" style="top:661px;left:301px"><i>0</i><i>0</i></p><p class="S z" style="top:661px;left:335px"><i>0</i><i>0</i></p><p class="S z" style="top:661px;left:362px"><i>0</i><i>0</i></p><p class="S z" style="top:661px;left:389px"><i>0</i><i>0</i></p><p class="S z" style="top:661px;left:416px"><i>0</i><i>0</i></p><p class="S z" style="top:661px;left:443px"><i>0</i><i>0</i></p><p class="S z" style="top:661px;left:470px"><i>0</i><i>0</i></p><p class="S z" style="top:661px;left:497px"><i>0</i><i>0</i></p><p class="S z" style="top:661px;left:524px"><i>0</i><i>0</i></p><p class="as" style="top:662px">................</p><p class="S ad" style="top:678px"><i>0</i><i>0</i><i>0</i><i>0</i><i>0</i><i>2</i><i>3</i><i>0</i><i>:</i></p><p class="S z" style="top:678px;left:112px"><i>0</i><i>0</i></p><p class="S z" style="top:678px;left:139px"><i>0</i><i>0</i></p><p class="S z" style="top:678px;left:166px"><i>0</i><i>0</i></p><p class="S z" style="top:678px;left:193px"><i>0</i><i>0</i></p><p class="S z" style="top:678px;left:220px"><i>0</i><i>0</i></p><p class="S z" style="top:678px;left:247px"><i>0</i><i>0</i></p><p class="S z" style="top:678px;left:274px"><i>0</i><i>0</i></p><p class="S z" style="top:678px;left:301px"><i>0</i><i>0</i></p><p class="S z" style="top:678px;left:335px"><i>0</i><i>0</i></p><p class="S z" style="top:678px;left:362px"><i>0</i><i>0</i></p><p class="S z" style="top:678px;left:389px"><i>0</i><i>0</i></p><p class="S z" style="top:678px;left:416px"><i>0</i><i>0</i></p><p class="S z" style="top:678px;left:443px"><i>0</i><i>0</i></p><p class="S z" style="top:678px;left:470px"><i>0</i><i>0</i></p><p class="S z" style="top:678px;left:497px"><i>0</i><i>0</i></p><p class="S z" style="top:678px;left:524px"><i>0</i><i>0</i></p><p class="as" style="top:679px">................</p><p class="S ad" style="top:695px"><i>0</i><i>0</i><i>0</i><i>0</i><i>0</i><i>2</i><i>4</i><i>0</i><i>:</i></p><p class="S z" style="top:695px;left:112px"><i>0</i><i>0</i></p><p class="S z" style="top:695px;left:139px"><i>0</i><i>0</i></p><p class="S z" style="top:695px;left:166px"><i>0</i><i>0</i></p><p class="S z" style="top:695px;left:193px"><i>0</i><i>0</i></p><p class="S z" style="top:695px;left:220px"><i>0</i><i>0</i></p><p class="S z" style="top:695px;left:247px"><i>0</i><i>0</i></p><p class="S z" style="top:695px;left:274px"><i>0</i><i>0</i></p><p class="S z" style="top:695px;left:301px"><i>0</i><i>0</i></p><p class="S z" style="top:695px;left:335px"><i>0</i><i>0</i></p><p class="S z" style="top:695px;left:362px"><i>0</i><i>0</i></p><p class="S z" style="top:695px;left:389px"><i>0</i><i>0</i></p><p class="S z" style="top:695px;left:416px"><i>0</i><i>0</i></p><p class="S z" style="top:695px;left:443px"><i>0</i><i>0</i></p><p class="S z" style="top:695px;left:470px"><i>0</i><i>0</i></p><p class="S z" style="top:695px;left:497px"><i>0</i><i>0</i></p><p class="S z" style="top:695px;left:524px"><i>0</i><i>0</i></p><p class="as" style="top:696px">................</p><p class="S ad" style="top:712px"><i>0</i><i>0</i><i>0</i><i>0</i><i>0</i><i>2</i><i>5</i><i>0</i><i>:</i></p><p class="S z" style="top:712px;left:112px"><i>0</i><i>0</i></p><p class="S z" style="top:712px;left:139px"><i>0</i><i>0</i></p><p class="S z" style="top:712px;left:166px"><i>0</i><i>0</i></p><p class="S z" style="top:712px;left:193px"><i>0</i><i>0</i></p><p class="S z" style="top:712px;left:220px"><i>0</i><i>0</i></p><p class="S z" style="top:712px;left:247px"><i>0</i><i>0</i></p><p class="S z" style="top:712px;left:274px"><i>0</i><i>0</i></p><p class="S z" style="top:712px;left:301px"><i>0</i><i>0</i></p><p class="S z" style="top:712px;left:335px"><i>0</i><i>0</i></p><p class="S z" style="top:712px;left:362px"><i>0</i><i>0</i></p><p class="S z" style="top:712px;left:389px"><i>0</i><i>0</i></p><p class="S z" style="top:712px;left:416px"><i>0</i><i>0</i></p><p class="S z" style="top:712px;left:443px"><i>0</i><i>0</i></p><p class="S z" style="top:712px;left:470px"><i>0</i><i>0</i></p><p class="S z" style="top:712px;left:497px"><i>0</i><i>0</i></p><p class="S z" style="top:712px;left:524px"><i>0</i><i>0</i></p><p class="as" style="top:713px">................</p><p class="S ad" style="top:729px"><i>0</i><i>0</i><i>0</i><i>0</i><i>0</i><i>2</i><i>6</i><i>0</i><i>:</i></p><p class="S z" style="top:729px;left:112px"><i>0</i><i>0</i></p><p class="S z" style="top:729px;left:139px"><i>0</i><i>0</i></p><p class="S z" style="top:729px;left:166px"><i>0</i><i>0</i></p><p class="S z" style="top:729px;left:193px"><i>0</i><i>0</i></p><p class="S z" style="top:729px;left:220px"><i>0</i><i>0</i></p><p class="S z" style="top:729px;left:247px"><i>0</i><i>0</i></p><p class="S z" style="top:729px;left:274px"><i>0</i><i>0</i></p><p class="S z" style="top:729px;left:301px"><i>0</i><i>0</i></p><p class="S z" style="top:729px;left:335px"><i>0</i><i>0</i></p><p class="S z" style="top:729px;left:362px"><i>0</i><i>0</i></p><p class="S z" style="top:729px;left:389px"><i>0</i><i>0</i></p><p class="S z" style="top:729px;left:416px"><i>0</i><i>0</i></p><p class="S z" style="top:729px;left:443px"><i>0</i><i>0</i></p><p class="S z" style="top:729px;left:470px"><i>0</i><i>0</i></p><p class="S z" style="top:729px;left:497px"><i>0</i><i>0</i></p><p class="S z" style="top:729px;left:524px"><i>0</i><i>0</i></p><p class="as" style="top:730px">................</p><p class="S ad" style="top:746px"><i>0</i><i>0</i><i>0</i><i>0</i><i>0</i><i>2</i><i>7</i><i>0</i><i>:</i></p><p class="S z" style="top:746px;left:112px"><i>0</i><i>0</i></p><p class="S z" style="top:746px;left:139px"><i>0</i><i>0</i></p><p class="S z" style="top:746px;left:166px"><i>0</i><i>0</i></p><p class="S z" style="top:746px;left:193px"><i>0</i><i>0</i></p><p class="S z" style="top:746px;left:220px"><i>0</i><i>0</i></p><p class="S z" style="top:746px;left:247px"><i>0</i><i>0</i></p><p class="S z" style="top:746px;left:274px"><i>0</i><i>0</i></p><p class="S z" style="top:746px;left:301px"><i>0</i><i>0</i></p><p class="S z" style="top:746px;left:335px"><i>0</i><i>0</i></p><p class="S z" style="top:746px;left:362px"><i>0</i><i>0</i></p><p class="S z" style="top:746px;left:389px"><i>0</i><i>0</i></p><p class="S z" style="top:746px;left:416px"><i>0</i><i>0</i></p><p class="S z" style="top:746px;left:443px"><i>0</i><i>0</i></p><p class="S z" style="top:746px;left:470px"><i>0</i><i>0</i></p><p class="S z" style="top:746px;left:497px"><i>0</i><i>0</i></p><p class="S z" style="top:746px;left:524px"><i>0</i><i>0</i></p><p class="as" style="top:747px">................</p><p class="S ad" style="top:763px"><i>0</i><i>0</i><i>0</i><i>0</i><i>0</i><i>2</i><i>8</i><i>0</i><i>:</i></p><p class="S nz" style="top:763px;left:112px"><i>0</i><i>D</i></p><p class="S z" style="top:763px;left:139px"><i>0</i><i>0</i></p><p class="S z" style="top:763px;left:166px"><i>0</i><i>0</i></p><p class="S z" style="top:763px;left:193px"><i>0</i><i>0</i></p><p class="S z" style="top:763px;left:220px"><i>0</i><i>0</i></p><p class="S z" style="top:763px;left:247px"><i>0</i><i>0</i></p><p class="S z" style="top:763px;left:274px"><i>0</i><i>0</i></p><p class="S z" style="top:763px;left:301px"><i>0</i><i>0</i></p><p class="S z" style="top:763px;left:335px"><i>0</i><i>0</i></p><p class="S z" style="top:763px;left:362px"><i>0</i><i>0</i></p><p class="S z" style="top:763px;left:389px"><i>0</i><i>0</i></p><p class="S z" style="top:763px;left:416px"><i>0</i><i>0</i></p><p class="S z" style="top:763px;left:443px"><i>0</i><i>0</i></p><p class="S z" style="top:763px;left:470px"><i>0</i><i>0</i></p><p class="S z" style="top:763px;left:497px"><i>0</i><i>0</i></p><p class="S z" style="top:763px;left:524px"><i>0</i><i>0</i></p><p class="as" style="top:764px">................</p><p class="S ad" style="top:780px"><i>0</i><i>0</i><i>0</i><i>0</i><i>0</i><i>2</i><i>9</i><i>0</i><i>:</i></p><p class="S z" style="top:780px;left:112px"><i>0</i><i>0</i></p><p class="S z" style="top:780px;left:139px"><i>0</i><i>0</i></p><p class="S z" style="top:780px;left:166px"><i>0</i><i>0</i></p><p class="S z" style="top:780px;left:193px"><i>0</i><i>0</i></p><p class="S z" style="top:780px;left:220px"><i>0</i><i>0</i></p><p class="S z" style="top:780px;left:247px"><i>0</i><i>0</i></p><p class="S z" style="top:780px;left:274px"><i>0</i><i>0</i></p><p class="S z" style="top:780px;left:301px"><i>0</i><i>0</i></p><p class="S z" style="top:780px;left:335px"><i>0</i><i>0</i></p><p class="S z" style="top:780px;left:362px"><i>0</i><i>0</i></p><p class="S z" style="top:780px;left:389px"><i>0</i><i>0</i></p><p class="S z" style="top:780px;left:416px"><i>0</i><i>0</i></p><p class="S z" style="top:780px;left:443px"><i>0</i><i>0</i></p><p class="S z" style="top:780px;left:470px"><i>0</i><i>0</i></p><p class="S z" style="top:780px;left:497px"><i>0</i><i>0</i></p><p class="S z" style="top:780px;left:524px"><i>0</i><i>0</i></p><p class="as" style="top:781px">................</p><p class="S ad" style="top:797px"><i>0</i><i>0</i><i>0</i><i>0</i><i>0</i><i>2</i><i>A</i><i>0</i><i>:</i></p><p class="S z" style="top:797px;left:112px"><i>0</i><i>0</i></p><p class="S z" style="top:797px;left:139px"><i>0</i><i>0</i></p><p class="S z" style="top:797px;left:166px"><i>0</i><i>0</i></p><p class="S z" style="top:797px;left:193px"><i>0</i><i>0</i></p><p class="S z" style="top:797px;left:220px"><i>0</i><i>0</i></p><p class="S z" style="top:797px;left:247px"><i>0</i><i>0</i></p><p class="S z" style="top:797px;left:274px"><i>0</i><i>0</i></p><p class="S z" style="top:797px;left:301px"><i>0</i><i>0</i></p><p class="S z" style="top:797px;left:335px"><i>0</i><i>0</i></p><p class="S z" style="top:797px;left:362px"><i>0</i><i>0</i></p><p class="S z" style="top:797px;left:389px"><i>0</i><i>0</i></p><p class="S z" style="top:797px;left:416px"><i>0</i><i>0</i></p><p class="S z" style="top:797px;left:443px"><i>0</i><i>0</i></p><p class="S z" style="top:797px;left:470px"><i>0</i><i>0</i></p><p class="S z" style="top:797px;left:497px"><i>0</i><i>0</i></p><p class="S z" style="top:797px;left:524px"><i>0</i><i>0</i></p><p class="as" style="top:798px">................</p><p class="S ad" style="top:814px"><i>0</i><i>0</i><i>0</i><i>0</i><i>0</i><i>2</i><i>B</i><i>0</i><i>:</i></p><p class="S z" style="top:814px;left:112px"><i>0</i><i>0</i></p><p class="S z" style="top:814px;left:139px"><i>0</i><i>0</i></p><p class="S z" style="top:814px;left:166px"><i>0</i><i>0</i></p><p class="S z" style="top:814px;left:193px"><i>0</i><i>0</i></p><p class="S z" style="top:814px;left:220px"><i>0</i><i>0</i></p><p class="S z" style="top:814px;left:247px"><i>0</i><i>0</i></p><p class="S z" style="top:814px;left:274px"><i>0</i><i>0</i></p><p class="S z" style="top:814px;left:301px"><i>0</i><i>0</i></p><p class="S z" style="top:814px;left:335px"><i>0</i><i>0</i></p><p class="S z" style="top:814px;left:362px"><i>0</i><i>0</i></p><p class="S z" style="top:814px;left:389px"><i>0</i><i>0</i></p><p class="S z" style="top:814px;left:416px"><i>0</i><i>0</i></p><p class="S z" style="top:814px;left:443px"><i>0</i><i>0</i></p><p class="S z" style="top:814px;left:470px"><i>0</i><i>0</i></p><p class="S z" style="top:814px;left:497px"><i>0</i><i>0</i></p><p class="S z" style="top:814px;left:524px"><i>0</i><i>0</i></p><p class="as" style="top:815px">................</p><p class="S ad" style="top:831px"><i>0</i><i>0</i><i>0</i><i>0</i><i>0</i><i>2</i><i>C</i><i>0</i><i>:</i></p><p class="S z" style="top:831px;left:112px"><i>0</i><i>0</i></p><p class="S z" style="top:831px;left:139px"><i>0</i><i>0</i></p><p class="S z" style="top:831px;left:166px"><i>0</i><i>0</i></p><p class="S z" style="top:831px;left:193px"><i>0</i><i>0</i></p><p class="S z" style="top:831px;left:220px"><i>0</i><i>0</i></p><p class="S z" style="top:831px;left:247px"><i>0</i><i>0</i></p><p class="S z" style="top:831px;left:274px"><i>0</i><i>0</i></p><p class="S z" style="top:831px;left:301px"><i>0</i><i>0</i></p><p class="S z" style="top:831px;left:335px"><i>0</i><i>0</i></p><p class="S z" style="top:831px;left:362px"><i>0</i><i>0</i></p><p class="S z" style="top:831px;left:389px"><i>0</i><i>0</i></p><p class="S z" style="top:831px;left:416px"><i>0</i><i>0</i></p><p class="S z" style="top:831px;left:443px"><i>0</i><i>0</i></p><p class="S z" style="top:831px;left:470px"><i>0</i><i>0</i></p><p class="S z" style="top:831px;left:497px"><i>0</i><i>0</i></p><p class="S z" style="top:831px;left:524px"><i>0</i><i>0</i></p><p class="as" style="top:832px">................</p><p class="S ad" style="top:848px"><i>0</i><i>0</i><i>0</i><i>0</i><i>0</i><i>2</i><i>D</i><i>0</i><i>:</i></p><p class="S z" style="top:848px;left:112px"><i>0</i><i>0</i></p><p class="S z" style="top:848px;left:139px"><i>0</i><i>0</i></p><p class="S z" style="top:848px;left:166px"><i>0</i><i>0</i></p><p class="S z" style="top:848px;left:193px"><i>0</i><i>0</i></p><p class="S z" style="top:848px;left:220px"><i>0</i><i>0</i></p><p class="S z" style="top:848px;left:247px"><i>0</i><i>0</i></p><p class="S z" style="top:848px;left:274px"><i>0</i><i>0</i></p><p class="S z" style="top:848px;left:301px"><i>0</i><i>0</i></p><p class="S z" style="top:848px;left:335px"><i>0</i><i>0</i></p><p class="S z" style="top:848px;left:362px"><i>0</i><i>0</i></p><p class="S z" style="top:848px;left:389px"><i>0</i><i>0</i></p><p class="S z" style="top:848px;left:416px"><i>0</i><i>0</i></p><p class="S z" style="top:848px;left:443px"><i>0</i><i>0</i></p><p class="S z" style="top:848px;left:470px"><i>0</i><i>0</i></p><p class="S z" style="top:848px;left:497px"><i>0</i><i>0</i></p><p class="S z" style="top:848px;left:524px"><i>0</i><i>0</i></p><p class="as" style="top:849px">................</p><p class="S ad" style="top:865px"><i>0</i><i>0</i><i>0</i><i>0</i><i>0</i><i>2</i><i>E</i><i>0</i><i>:</i></p><p class="S z" style="top:865px;left:112px"><i>0</i><i>0</i></p><p class="S z" style="top:865px;left:139px"><i>0</i><i>0</i></p><p class="S z" style="top:865px;left:166px"><i>0</i><i>0</i></p><p class="S z" style="top:865px;left:193px"><i>0</i><i>0</i></p><p class="S z" style="top:865px;left:220px"><i>0</i><i>0</i></p><p class="S z" style="top:865px;left:247px"><i>0</i><i>0</i></p><p class="S z" style="top:865px;left:274px"><i>0</i><i>0</i></p><p class="S z" style="top:865px;left:301px"><i>0</i><i>0</i></p><p class="S z" style="top:865px;left:335px"><i>0</i><i>0</i></p><p class="S z" style="top:865px;left:362px"><i>0</i><i>0</i></p><p class="S z" style="top:865px;left:389px"><i>0</i><i>0</i></p><p class="S z" style="top:865px;left:416px"><i>0</i><i>0</i></p><p class="S z" style="top:865px;left:443px"><i>0</i><i>0</i></p><p class="S z" style="top:865px;left:470px"><i>0</i><i>0</i></p><p class="S z" style="top:865px;left:497px"><i>0</i><i>0</i></p><p class="S z" style="top:865px;left:524px"><i>0</i><i>0</i></p><p class="as" style="top:866px">................</p><p class="S ad" style="top:882px"><i>0</i><i>0</i><i>0</i><i>0</i><i>0</i><i>2</i><i>F</i><i>0</i><i>:</i></p><p class="S z" style="top:882px;left:112px"><i>0</i><i>0</i></p><p class="S z" style="top:882px;left:139px"><i>0</i><i>0</i></p><p class="S z" style="top:882px;left:166px"><i>0</i><i>0</i></p><p class="S z" style="top:882px;left:193px"><i>0</i><i>0</i></p><p class="S z" style="top:882px;left:220px"><i>0</i><i>0</i></p><p class="S z" style="top:882px;left:247px"><i>0</i><i>0</i></p><p class="S z" style="top:882px;left:274px"><i>0</i><i>0</i></p><p class="S z" style="top:882px;left:301px"><i>0</i><i>0</i></p><p class="S z" style="top:882px;left:335px"><i>0</i><i>0</i></p><p class="S z" style="top:882px;left:362px"><i>0</i><i>0</i></p><p class="S z" style="top:882px;left:389px"><i>0</i><i>0</i></p><p class="S z" style="top:882px;left:416px"><i>0</i><i>0</i></p><p class="S z" style="top:882px;left:443px"><i>0</i><i>0</i></p><p class="S z" style="top:882px;left:470px"><i>0</i><i>0</i></p><p class="S z" style="top:882px;left:497px"><i>0</i><i>0</i></p><p class="S z" style="top:882px;left:524px"><i>0</i><i>0</i></p><p class="as" style="top:883px">................</p><p class="S ad" style="top:899px"><i>0</i><i>0</i><i>0</i><i>0</i><i>0</i><i>3</i><i>0</i><i>0</i><i>:</i></p><p class="S z" style="top:899px;left:112px"><i>0</i><i>0</i></p><p class="S z" style="top:899px;left:139px"><i>0</i><i>0</i></p><p class="S z" style="top:899px;left:166px"><i>0</i><i>0</i></p><p class="S z" style="top:899px;left:193px"><i>0</i><i>0</i></p><p class="S z" style="top:899px;left:220px"><i>0</i><i>0</i></p><p class="S z" style="top:899px;left:247px"><i>0</i><i>0</i></p><p class="S z" style="top:899px;left:274px"><i>0</i><i>0</i></p><p class="S z" style="top:899px;left:301px"><i>0</i><i>0</i></p><p class="S z" style="top:899px;left:335px"><i>0</i><i>0</i></p><p class="S z" style="top:899px;left:362px"><i>0</i><i>0</i></p><p class="S z" style="top:899px;left:389px"><i>0</i><i>0</i></p><p class="S z" style="top:899px;left:416px"><i>0</i><i>0</i></p><p class="S z" style="top:899px;left:443px"><i>0</i><i>0</i></p><p class="S z" style="top:899px;left:470px"><i>0</i><i>0</i></p><p class="S z" style="top:899px;left:497px"><i>0</i><i>0</i></p><p class="S z" style="top:899px;left:524px"><i>0</i><i>0</i></p><p class="as" style="top:900px">................</p>
  <div class="a" style="left:720px;top:49px;width:14px;height:841px;background:#0c0c0c"></div>
  <div class="a" style="left:723px;top:60px;width:8px;height:12px;border-radius:4px;background:#5b5b5b"></div>
 </div>
</div>
<div class="a" style="left:6px;top:894px;width:728px;height:50px;border:1px solid #43434b"></div>
<div class="btn" style="left:16px;top:904px;border:1.3px solid #1a86f0"></div>
<div class="btn" style="left:49px;top:904px;border:1.3px solid #1a86f0"></div>
<div class="btn" style="left:82px;top:904px;border:1.3px solid #1a86f0"></div>
<div class="btn" style="left:108px;top:904px;border:1.3px solid #1d5fa8"></div>
<div class="btn" style="left:134px;top:904px;border:1px solid #3d3d45"></div>
<div class="btn" style="left:160px;top:904px;border:1px solid #3d3d45"></div>
<div class="btn" style="left:360px;top:904px;width:24px;border:1px solid #46464e;border-right:none;background:#141414"></div>
<p style="left:22.5px;top:905.5px;font-family:'Liberation Sans',sans-serif;font-size:11.5px;letter-spacing:0;line-height:18px;color:#f0f0f0">Aa</p>
<p style="left:87.5px;top:905.5px;font-family:'Liberation Sans',sans-serif;font-size:11.5px;line-height:18px;color:#f0f0f0;letter-spacing:-0.6px">abc</p>
<div class="a" style="left:744px;top:49px;width:690px;height:898px;background:#111111"></div>
<div class="a" style="left:752px;top:57px;width:680px;height:21px;background:#2d2d30"></div><p class="tx" style="top:58px;left:757px">Name</p><p class="tx" style="top:58px;left:976px">Value</p><p class="tx" style="top:79px;left:757px">Binary (8 bit)</p><p class="tx" style="top:79px;left:976px">0b11111110</p><div class="a" style="left:752px;top:99px;width:680px;height:21px;background:#1c1c1c"></div><p class="tx" style="top:100px;left:757px">uint8_t</p><p class="tx" style="top:100px;left:976px">254</p><p class="tx" style="top:121px;left:757px">int8_t</p><p class="tx" style="top:121px;left:976px">-2</p><div class="a" style="left:752px;top:141px;width:680px;height:21px;background:#1c1c1c"></div><p class="tx" style="top:142px;left:757px">uint16_t</p><p class="tx" style="top:142px;left:976px">27134</p><p class="tx" style="top:163px;left:757px">int16_t</p><p class="tx" style="top:163px;left:976px">27134</p><div class="a" style="left:752px;top:183px;width:680px;height:21px;background:#1c1c1c"></div><p class="tx" style="top:184px;left:757px">uint24_t</p><p class="tx" style="top:184px;left:976px">15886846</p><p class="tx" style="top:205px;left:757px">int24_t</p><p class="tx" style="top:205px;left:976px">-890370</p><div class="a" style="left:752px;top:225px;width:680px;height:21px;background:#1c1c1c"></div><p class="tx" style="top:226px;left:757px">uint32_t</p><p class="tx" style="top:226px;left:976px">988965374</p><p class="tx" style="top:247px;left:757px">int32_t</p><p class="tx" style="top:247px;left:976px">988965374</p><div class="a" style="left:752px;top:267px;width:680px;height:21px;background:#1c1c1c"></div><p class="tx" style="top:268px;left:757px">uint48_t</p><p class="tx" style="top:268px;left:976px">68372573350398</p><p class="tx" style="top:289px;left:757px">int48_t</p><p class="tx" style="top:289px;left:976px">68372573350398</p><div class="a" style="left:752px;top:309px;width:680px;height:21px;background:#1c1c1c"></div><p class="tx" style="top:310px;left:757px">uint64_t</p><p class="tx" style="top:310px;left:976px">4979360710584855038</p><p class="tx" style="top:331px;left:757px">int64_t</p><p class="tx" style="top:331px;left:976px">4979360710584855038</p><div class="a" style="left:752px;top:351px;width:680px;height:21px;background:#1c1c1c"></div><p class="tx" style="top:352px;left:757px">half float (16 bit)</p><p class="tx" style="top:352px;left:976px">3068</p><p class="tx" style="top:373px;left:757px">float (32 bit)</p><p class="tx" style="top:373px;left:976px">0.00184947</p><div class="a" style="left:752px;top:393px;width:680px;height:21px;background:#1c1c1c"></div><p class="tx" style="top:394px;left:757px">double (64 bit)</p><p class="tx" style="top:394px;left:976px">7.93143E+24</p><p class="tx" style="top:415px;left:757px">long double (128 bit)</p><p class="tx" style="top:415px;left:976px">-NAN</p><div class="a" style="left:752px;top:435px;width:680px;height:21px;background:#1c1c1c"></div><p class="tx" style="top:436px;left:757px">Signed LEB128</p><p class="tx" style="top:436px;left:976px">-2818</p><p class="tx" style="top:457px;left:757px">Unsigned LEB128</p><p class="tx" style="top:457px;left:976px">13566</p><div class="a" style="left:752px;top:477px;width:680px;height:21px;background:#1c1c1c"></div><p class="tx" style="top:478px;left:757px">bool</p><p class="tx" style="top:478px;left:976px">Invalid</p><p class="tx" style="top:499px;left:757px">ASCII Character</p><p class="tx" style="top:499px;left:976px">' '</p><div class="a" style="left:752px;top:519px;width:680px;height:21px;background:#1c1c1c"></div><p class="tx" style="top:520px;left:757px">Wide Character</p><p class="tx" style="top:520px;left:976px">'Invalid'</p><p class="tx" style="top:541px;left:757px">UTF-8 code point</p><p class="tx" style="top:541px;left:976px">'Invalid' (U+0xFFFD)</p><div class="a" style="left:752px;top:561px;width:680px;height:21px;background:#1c1c1c"></div><p class="tx" style="top:562px;left:757px">String</p><p class="tx" style="top:562px;left:976px">"\xFEi\xF2:/&gt;\x1AE\xAA\x86\xA1\xA..."</p><p class="tx" style="top:583px;left:757px">Wide String</p><p class="tx" style="top:583px;left:976px">L"\xE6\xA7\xBE\xE3\xAB\xB2\xE3\xB8..."</p><div class="a" style="left:752px;top:603px;width:680px;height:21px;background:#1c1c1c"></div><p class="tx" style="top:604px;left:757px">time_t</p><p class="tx" style="top:604px;left:976px">Invalid</p><p class="tx" style="top:625px;left:757px">DOS Date</p><p class="tx" style="top:625px;left:976px">30/15/2032</p><div class="a" style="left:752px;top:645px;width:680px;height:21px;background:#1c1c1c"></div><p class="tx" style="top:646px;left:757px">DOS Time</p><p class="tx" style="top:646px;left:976px">13:15:60</p><p class="tx" style="top:667px;left:757px">GUID</p><p class="tx" style="top:667px;left:976px">{3AF269FE-3E2F-451A-AA86-A1AAF3E58745}</p><div class="a" style="left:752px;top:687px;width:680px;height:21px;background:#1c1c1c"></div><p class="tx" style="top:688px;left:757px">RGBA8 Color</p><p class="tx" style="top:709px;left:757px">RGB565 Color</p><div class="hl" style="top:57px"></div><div class="hl" style="top:78px"></div><div class="hl" style="top:99px"></div><div class="hl" style="top:120px"></div><div class="hl" style="top:141px"></div><div class="hl" style="top:162px"></div><div class="hl" style="top:183px"></div><div class="hl" style="top:204px"></div><div class="hl" style="top:225px"></div><div class="hl" style="top:246px"></div><div class="hl" style="top:267px"></div><div class="hl" style="top:288px"></div><div class="hl" style="top:309px"></div><div class="hl" style="top:330px"></div><div class="hl" style="top:351px"></div><div class="hl" style="top:372px"></div><div class="hl" style="top:393px"></div><div class="hl" style="top:414px"></div><div class="hl" style="top:435px"></div><div class="hl" style="top:456px"></div><div class="hl" style="top:477px"></div><div class="hl" style="top:498px"></div><div class="hl" style="top:519px"></div><div class="hl" style="top:540px"></div><div class="hl" style="top:561px"></div><div class="hl" style="top:582px"></div><div class="hl" style="top:603px"></div><div class="hl" style="top:624px"></div><div class="hl" style="top:645px"></div><div class="hl" style="top:666px"></div><div class="hl" style="top:687px"></div><div class="hl" style="top:708px"></div><div class="hl" style="top:729px"></div>
<div class="a" style="left:752px;top:57px;width:1px;height:673px;background:#3a3a3f"></div>
<div class="a" style="left:971px;top:57px;width:1px;height:673px;background:#3a3a3f"></div>
<div class="a" style="left:1431px;top:57px;width:1px;height:673px;background:#3a3a3f"></div>
<div class="a" style="left:976px;top:690px;width:449px;height:15px;background:#ff6ef0"></div>
<div class="a" style="left:976px;top:711px;width:449px;height:15px;background:#ef3a6c"></div>
<div class="a" style="left:752px;top:733px;width:680px;height:23px;background:#161616;border:1px solid #48484e"></div>
<p class="tx" style="left:1072px;top:735px">Edit</p>
<div class="a" style="left:752px;top:781px;width:680px;height:1px;background:#3a3a3f"></div>
<div class="a" style="left:752px;top:806px;width:451px;height:23px;background:#1e2d4a"></div>
<div class="a" style="left:754px;top:808px;width:223px;height:19px;background:#3c83dd"></div>
<p class="tx" style="left:947px;top:808px">Little</p>
<p class="tx" style="left:1207px;top:808px">Endian</p>
<div class="a" style="left:752px;top:833px;width:451px;height:23px;background:#1e2d4a"></div>
<div class="a" style="left:754px;top:835px;width:149px;height:19px;background:#3c83dd"></div>
<p class="tx" style="left:942px;top:835px">Decimal</p>
<p class="tx" style="left:1207px;top:835px">Format</p>
<div class="a" style="left:752px;top:860px;width:451px;height:23px;background:#1e2d4a"></div>
<div class="a" style="left:754px;top:862px;width:223px;height:19px;background:#3c83dd"></div>
<p class="tx" style="left:967px;top:862px">No</p>
<p class="tx" style="left:1207px;top:862px">Invert</p>
<svg class="a" style="left:0;top:0" width="1434" height="947" viewBox="0 0 1434 947" fill="none" stroke-linejoin="miter">
 <!-- undo -->
 <g stroke="#1b4f86" stroke-width="1.15">
  <path d="M12.4 7.4 V11.6 H16.4"/>
  <path d="M12.7 11.3 L14.6 9.4 A4.1 4.1 0 1 1 20.4 15.2 L14.8 20.8"/>
 </g>
 <g stroke="#1b4f86" stroke-width="1.15" transform="translate(63.9 0) scale(-1 1)">
  <path d="M12.4 7.4 V11.6 H16.4"/>
  <path d="M12.7 11.3 L14.6 9.4 A4.1 4.1 0 1 1 20.4 15.2 L14.8 20.8"/>
 </g>
 <!-- new file -->
 <path d="M74.8 7.6 H80 L84.5 12.1 V20.4 Q84.5 21.5 83.4 21.5 H74.6 Q73.5 21.5 73.5 20.4 V8.7 Q73.5 7.6 74.6 7.6 Z" stroke="#f2f2f2" stroke-width="1.2"/>
 <path d="M80 7.6 V11.5 H84.5" stroke="#f2f2f2" stroke-width="1.2"/>
 <path d="M80.3 8 L84 11.4 H80.3 Z" fill="#f2f2f2"/>
 <!-- open folder -->
 <g stroke="#e6b86c" stroke-width="1.2">
  <path d="M115.7 12.3 V9.8 H109.2 L108.2 8.6 H102.7 V20.6 H114.8 L117.6 12.4 H109.6 L108.6 13.4 H104.4 L102.7 20.6"/>
 </g>
 <!-- save -->
 <g stroke="#1a4f8c" stroke-width="1.1">
  <path d="M133.6 7.6 H146.4 L147.5 8.7 V21.3 H133.6 Z"/>
 </g>
 <path d="M136 7.6 H144.2 V12.2 H136 Z M140 8.2 V10.8 H142.6 V8.2 Z" fill="#1a4f8c" fill-rule="evenodd"/>
 <!-- save as -->
 <g stroke="#1f6fd0" stroke-width="1.1">
  <path d="M168.3 19.8 H165.6 Q164.6 19.8 164.6 18.8 V8.6 Q164.6 7.6 165.6 7.6 H174.6 L176.6 9.6"/>
  <path d="M177.6 11.7 L179 13.1 L170.6 21.5 L168.5 21.9 L169 19.8 L177.6 11.2 Z"/>
 </g>
 <path d="M167 7.6 H174 V12.2 H167 Z M170.3 8.2 V10.8 H172.8 V8.2 Z" fill="#1f6fd0" fill-rule="evenodd"/>
 <!-- bookmark -->
 <path d="M197.6 21.3 V7.5 H207.6 V21.3 L202.6 16.2 Z" stroke="#3b9c40" stroke-width="1.25"/>
 <!-- footer chevrons -->
 <g stroke="#f0f0f0" stroke-width="1.1">
  <path d="M365.1 915 L372.2 908.3 L378.9 915"/>
  <path d="M365.1 921.5 L372.2 914.8 L378.9 921.5"/>
 </g>
 <!-- lightbulb -->
 <circle cx="62.3" cy="912.3" r="4.6" fill="#f4f4f4"/>
 <path d="M59.6 915 H65 L64.8 917 H59.8 Z" fill="#f4f4f4"/>
 <rect x="60.6" y="917.3" width="3.5" height="4.2" stroke="#f4f4f4" stroke-width="1.1"/>
 <!-- map -->
 <path d="M140.2 912.3 L144.6 910 L149.2 912.1 L153.6 909.9 V919 L149.2 921.2 L144.6 919.2 L140.2 921.3 Z M144.6 910 V919.2 M149.2 912.1 V921.2" stroke="#f4f4f4" stroke-width="1.2"/>
 <!-- table -->
 <rect x="165.5" y="909.5" width="13" height="12" stroke="#f4f4f4" stroke-width="1"/>
 <path d="M165.5 914.5 H178.5 M165.5 918.5 H178.5 M170.5 911 V921.5 M174.5 911 V921.5" stroke="#f4f4f4" stroke-width="1"/>
 <path d="M165 909 H179 V911.5 H165 Z" fill="#f4f4f4"/>
 <!-- pilcrow -->
 <g stroke="#a8a8a8" stroke-width="1" fill="none">
  <path d="M124.6 908.6 H118.6 A3.4 3.4 0 0 0 118.6 915.4 H119.6"/>
  <path d="M119.6 908.6 V921.7 M122.8 908.6 V921.7 M118.4 921.7 H124.4"/>
 </g>
</svg>

</div></body></html>
